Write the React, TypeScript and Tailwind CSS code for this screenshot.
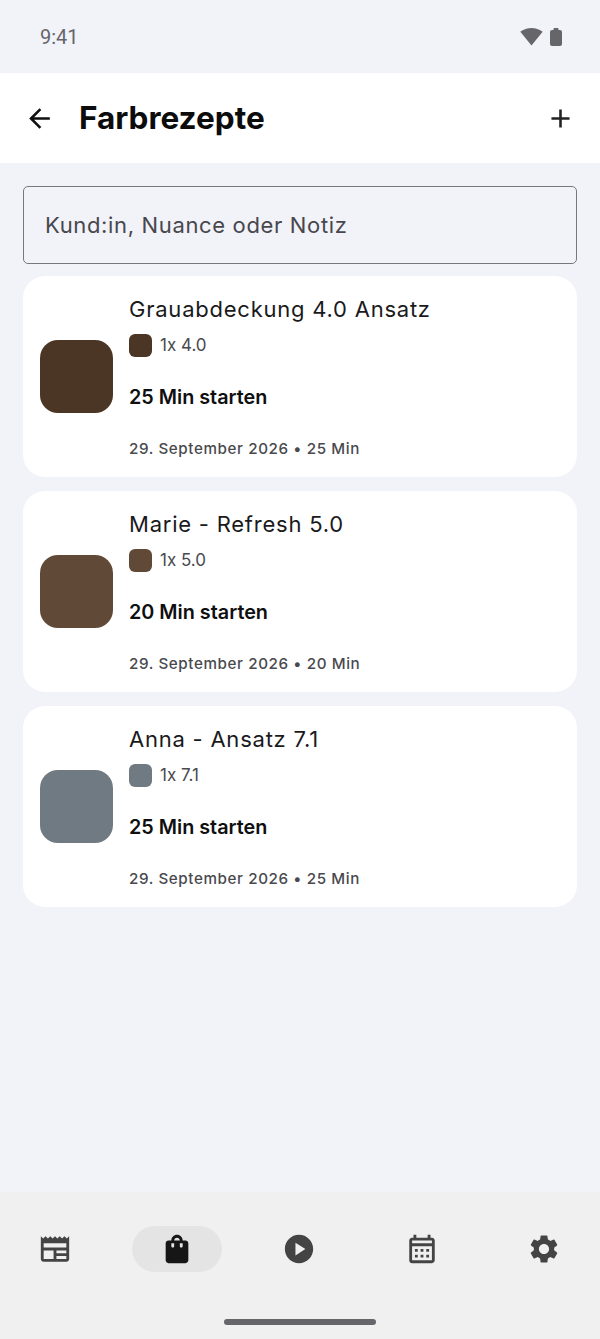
import { MdAdd, MdArrowBack, MdNewspaper, MdOutlineCalendarMonth, MdPlayCircle, MdSettings, MdShoppingBag, MdSignalWifi4Bar } from 'react-icons/md'

const RECIPES = [
  { title: 'Grauabdeckung 4.0 Ansatz', shade: '4.0', mins: 25, color: 'bg-[#4b3626]' },
  { title: 'Marie - Refresh 5.0', shade: '5.0', mins: 20, color: 'bg-[#604936]' },
  { title: 'Anna - Ansatz 7.1', shade: '7.1', mins: 25, color: 'bg-[#6f7a83]' },
]

function RecipeCard({ title, shade, mins, color }: (typeof RECIPES)[number]) {
  return (
    <div className="flex h-[201px] items-center rounded-[22px] bg-white pl-[16.5px] pr-4">
      <div className={`h-[73px] w-[73px] shrink-0 rounded-[18px] ${color}`} />
      <div className="ml-[16.5px] flex flex-col">
        <div className="text-[22px] leading-[28px] tracking-[0.77px] text-[#1a1a1c]">{title}</div>
        <div className="mt-[11px] flex items-center gap-2">
          <div className={`h-[23px] w-[23px] rounded-[6px] ${color}`} />
          <span className="text-[17px] leading-[22px] text-[#49494e] [font-feature-settings:'calt'_0]">1x {shade}</span>
        </div>
        <div className="mt-[28px] text-[19.8px] leading-[24px] font-semibold text-[#0f0f10]">{mins} Min starten</div>
        <div className="mt-[30px] text-[15.2px] leading-[20px] font-medium tracking-[0.6px] text-[#49494e]">
          29. September 2026 • {mins} Min
        </div>
      </div>
    </div>
  )
}

export default function App() {
  return (
    <div className="flex h-[1339px] w-[600px] flex-col overflow-hidden bg-[#f2f2f9] font-['Inter','Noto_Sans',sans-serif]">
      {/* Status bar */}
      <div className="flex h-[73px] items-center justify-between pl-[40px] pr-[38px] text-[#65656a]">
        <span className="font-['Roboto',sans-serif] text-[20px]">9:41</span>
        <div className="flex items-center gap-[7px]">
          <MdSignalWifi4Bar size={23} />
          <svg width="12" height="18" viewBox="0 0 12 18" fill="currentColor">
            <path d="M3.5 2V1a1 1 0 0 1 1-1h3a1 1 0 0 1 1 1v1H10a2 2 0 0 1 2 2v12a2 2 0 0 1-2 2H2a2 2 0 0 1-2-2V4a2 2 0 0 1 2-2z" />
          </svg>
        </div>
      </div>

      {/* Top bar */}
      <div className="flex h-[90px] items-center bg-white pl-[24px] pr-[24px]">
        <MdArrowBack size={31} className="text-[#111]" />
        <h1 className="ml-[24px] text-[31.5px] font-bold text-[#0c0c0d]">Farbrezepte</h1>
        <MdAdd size={31} className="ml-auto text-[#222]" />
      </div>

      {/* Search */}
      <div className="mx-[23px] mt-[23px] flex h-[78px] items-center rounded-[5px] border border-[#77777c] pl-[21px]">
        <span className="text-[22px] tracking-[0.65px] text-[#47474c]">Kund:in, Nuance oder Notiz</span>
      </div>

      {/* Recipes */}
      <div className="mx-[23px] mt-[12px] flex flex-col gap-[14px]">
        {RECIPES.map(r => (
          <RecipeCard key={r.title} {...r} />
        ))}
      </div>

      {/* Bottom nav */}
      <div className="mt-auto h-[147px] bg-[#f0f0f0]">
        <div className="mt-[34px] grid h-[46px] grid-cols-5 gap-[32px] pl-[10px] pr-[11px] text-[#444]">
          <div className="flex items-center justify-center">
            <MdNewspaper size={34} />
          </div>
          <div className="flex items-center justify-center rounded-full bg-[#e4e4e4] text-[#161616]">
            <MdShoppingBag size={34} />
          </div>
          <div className="flex items-center justify-center">
            <MdPlayCircle size={34} />
          </div>
          <div className="flex items-center justify-center">
            <MdOutlineCalendarMonth size={34} />
          </div>
          <div className="flex items-center justify-center">
            <MdSettings size={34} />
          </div>
        </div>
        <div className="mx-auto mt-[47px] h-[6px] w-[152px] rounded-full bg-[#66666a]" />
      </div>
    </div>
  )
}
